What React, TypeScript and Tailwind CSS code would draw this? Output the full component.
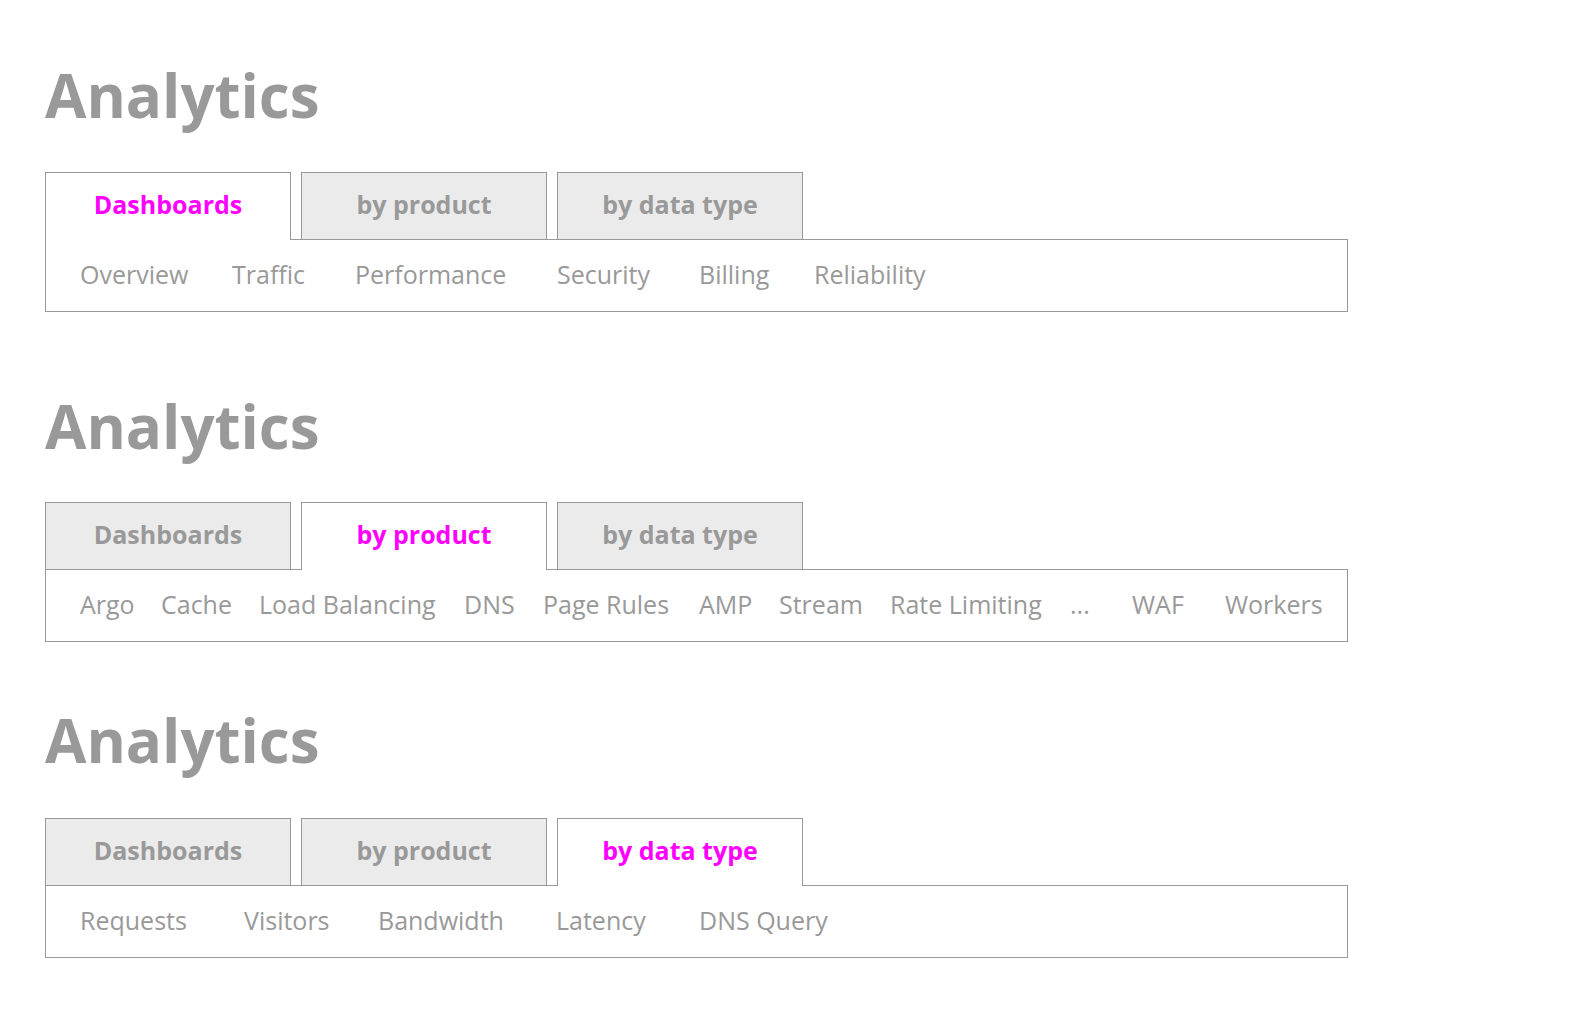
const tabs = ['Dashboards', 'by product', 'by data type'];

type Item = { label: string; w?: string };

const sections: { active: number; top: string; gap: string; items: Item[] }[] = [
  {
    active: 0,
    top: 'mt-[65px]',
    gap: 'mt-[47px]',
    items: [
      { label: 'Overview', w: 'w-[152px]' },
      { label: 'Traffic', w: 'w-[123px]' },
      { label: 'Performance', w: 'w-[202px]' },
      { label: 'Security', w: 'w-[142px]' },
      { label: 'Billing', w: 'w-[115px]' },
      { label: 'Reliability' },
    ],
  },
  {
    active: 1,
    top: 'mt-[84px]',
    gap: 'mt-[46px]',
    items: [
      { label: 'Argo', w: 'w-[81px]' },
      { label: 'Cache', w: 'w-[98px]' },
      { label: 'Load Balancing', w: 'w-[205px]' },
      { label: 'DNS', w: 'w-[79px]' },
      { label: 'Page Rules', w: 'w-[156px]' },
      { label: 'AMP', w: 'w-[80px]' },
      { label: 'Stream', w: 'w-[111px]' },
      { label: 'Rate Limiting', w: 'w-[180px]' },
      { label: '...', w: 'w-[62px]' },
      { label: 'WAF', w: 'w-[93px]' },
      { label: 'Workers' },
    ],
  },
  {
    active: 2,
    top: 'mt-[68px]',
    gap: 'mt-[48px]',
    items: [
      { label: 'Requests', w: 'w-[164px]' },
      { label: 'Visitors', w: 'w-[134px]' },
      { label: 'Bandwidth', w: 'w-[178px]' },
      { label: 'Latency', w: 'w-[143px]' },
      { label: 'DNS Query' },
    ],
  },
];

function TabBar({ active }: { active: number }) {
  return (
    <div className="relative z-10 -mb-px flex gap-[10px]">
      {tabs.map((t, i) =>
        i === active ? (
          <div
            key={t}
            className="flex h-[68px] w-[246px] items-center justify-center border border-b-0 border-[#999] bg-white pb-[3px] text-[25px] font-bold text-[#ff00ff]"
          >
            {t}
          </div>
        ) : (
          <div
            key={t}
            className="flex h-[68px] w-[246px] items-center justify-center border border-[#999] bg-[#ebebeb] pb-[2px] text-[25px] font-bold text-[#999]"
          >
            {t}
          </div>
        ),
      )}
    </div>
  );
}

export default function App() {
  return (
    <div className="flex flex-col bg-white pl-[45px] font-['Open_Sans',sans-serif]">
      {sections.map((s, idx) => (
        <section key={idx} className={s.top}>
          <h1 className="text-[60px] font-bold leading-none text-[#999]">Analytics</h1>
          <div className={s.gap}>
            <TabBar active={s.active} />
            <div className="flex h-[73px] w-[1303px] items-center border border-[#999] pb-[2px] pl-[34px] text-[25px] text-[#999]">
              {s.items.map((it) => (
                <span key={it.label} className={`shrink-0 whitespace-nowrap ${it.w ?? ''}`}>
                  {it.label}
                </span>
              ))}
            </div>
          </div>
        </section>
      ))}
    </div>
  );
}
